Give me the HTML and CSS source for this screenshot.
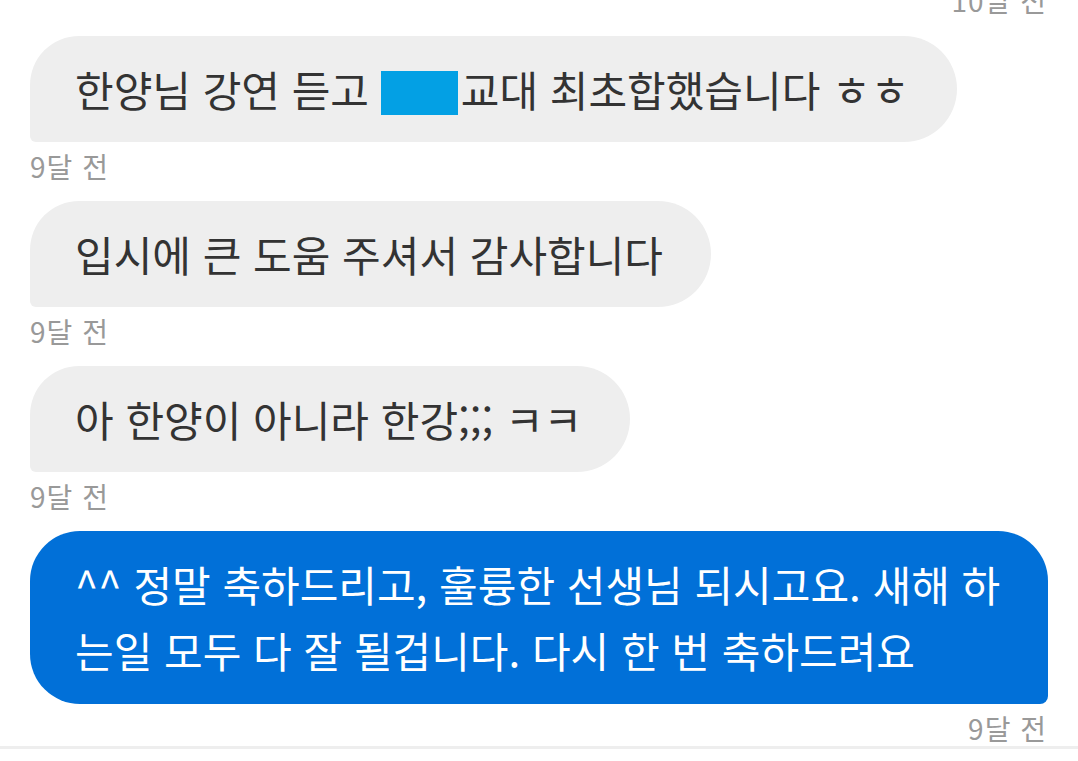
FILE: index.html
```html
<!DOCTYPE html>
<html lang="ko">
<head>
    <meta charset="UTF-8">
    <meta name="viewport" content="width=device-width, initial-scale=1.0">
    <title>메시지</title>
    <link rel="stylesheet" href="styles.css">
</head>
<body>

<div class="chat">
    <div class="time time-top right">10달 전</div>

    <div class="msg">
        <div class="bubble gray">한양님 강연 듣고 <span class="censor"></span>교대 최초합했습니다 ㅎㅎ</div>
        <div class="time">9달 전</div>
    </div>

    <div class="msg">
        <div class="bubble gray">입시에 큰 도움 주셔서 감사합니다</div>
        <div class="time">9달 전</div>
    </div>

    <div class="msg">
        <div class="bubble gray">아 한양이 아니라 한강;;; ㅋㅋ</div>
        <div class="time">9달 전</div>
    </div>

    <div class="msg mine">
        <div class="bubble blue">^^ 정말 축하드리고, 훌륭한 선생님 되시고요. 새해 하<br>는일 모두 다 잘 될겁니다. 다시 한 번 축하드려요</div>
        <div class="time right">9달 전</div>
    </div>
</div>
<div class="divider"></div>

</body>
</html>
```

FILE: styles.css
```css
body {
    margin: 0;
    background-color: #fff;
    font-family: "Noto Sans CJK KR", "Noto Sans", sans-serif;
    overflow: hidden;
}

.chat {
    padding: 0 30px;
    margin-top: -18px;
}

.msg {
    display: flex;
    flex-direction: column;
    align-items: flex-start;
    margin-bottom: 17px;
}

.msg.mine {
    align-items: stretch;
}

.bubble {
    font-size: 42px;
    line-height: 66px;
    padding: 20px 48px 20px 45px;
    white-space: nowrap;
}

.gray {
    background-color: #eeeeee;
    color: #333;
    border-radius: 50px 54px 54px 6px;
}

.blue {
    background-color: #0170d8;
    color: #fff;
    line-height: 66px;
    padding: 20px 45px 21px;
    border-radius: 50px 50px 8px 50px;
}

.censor {
    display: inline-block;
    width: 77px;
    height: 44px;
    vertical-align: -8px;
    margin-right: 3px;
    background-color: #03a0e4;
}

.time {
    font-size: 28px;
    line-height: 36px;
    color: #999;
    margin-top: 6px;
    letter-spacing: 1px;
}

.time-top {
    margin-top: 0;
    margin-bottom: 18px;
}

.right {
    align-self: stretch;
    text-align: right;
    padding-right: 1px;
}

.divider {
    height: 3px;
    background-color: #eeeeee;
    margin-top: -17px;
}
```
